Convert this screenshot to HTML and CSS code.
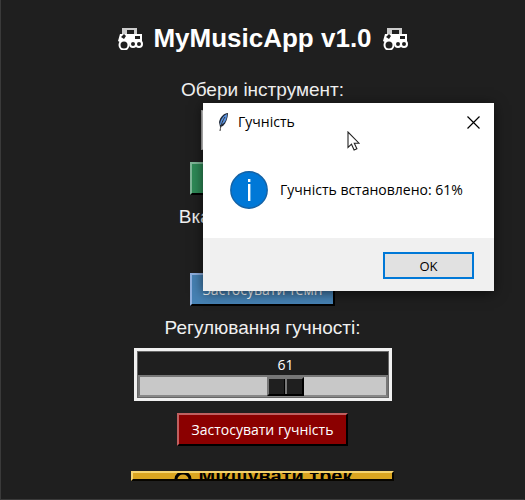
FILE: index.html
```html
<!DOCTYPE html>
<html lang="uk">
<head>
<meta charset="utf-8">
<meta name="viewport" content="width=device-width, initial-scale=1">
<title>MyMusicApp v1.0</title>
<link rel="stylesheet" href="styles.css">
</head>
<body>
<svg class="defs" aria-hidden="true">
  <symbol id="drum" viewBox="0 0 26 24">
    <path d="M5 2h15v7H5z" fill="#ccc"/>
    <path d="M10 4h7v4h-7z" fill="#1f1f1f"/>
    <path d="M3 8h22v10H6L1 15z" fill="#fff"/>
    <path d="M4 11l3-3 2 2-2 3zM18 10h5v3h-5z" fill="#1f1f1f"/>
    <circle cx="7" cy="19" r="4.500" fill="#1f1f1f" stroke="#fff" stroke-width="2"/>
    <circle cx="16" cy="18" r="3" fill="#1f1f1f" stroke="#fff" stroke-width="2"/>
    <circle cx="22" cy="18" r="3" fill="#1f1f1f" stroke="#fff" stroke-width="2"/>
  </symbol>
</svg>
<main class="app">
  <h1 class="title">
    <svg class="drum" aria-hidden="true"><use href="#drum"/></svg>
    <span>MyMusicApp v1.0</span>
    <svg class="drum" aria-hidden="true"><use href="#drum"/></svg>
  </h1>
  <label class="label" for="instrument">Обери інструмент:</label>
  <select class="combo" id="instrument"><option></option></select>
  <button class="btn green" type="button" aria-label="Інструмент"></button>
  <label class="label" for="tempo">Вкажи темп (BPM):</label>
  <input class="tempo" id="tempo" type="text">
  <button class="btn blue" type="button">Застосувати темп</button>
  <label class="label" for="volume">Регулювання гучності:</label>
  <div class="scale">
    <output class="value" for="volume">61</output>
    <input class="range" id="volume" type="range" min="0" max="100" value="61">
  </div>
  <button class="btn red" type="button">Застосувати гучність</button>
  <button class="btn gold" type="button">
    <svg class="phones" viewBox="0 0 18 18" aria-hidden="true"><path d="M2 14V12a7 6 0 0 1 14 0v2" fill="none" stroke="#000" stroke-width="3"/><path d="M2 12h4v6H2zM12 12h4v6h-4z"/></svg>
    <span>Мікшувати трек</span>
  </button>
</main>

<section class="dialog" role="dialog" aria-labelledby="dlg-title">
  <header class="bar">
    <svg class="feather" viewBox="0 0 12 20" aria-hidden="true">
      <path d="M11 1C7 1 3 5 2 10l1 5 3-1c3-3 5-8 5-13z" fill="#1d2636"/>
      <path d="M10 2C6 4 3 8 3 13c5-1 7-6 7-11z" fill="#5b93e0"/>
      <path d="M8 5C6 8 4 12 3 19" fill="none" stroke="#333" stroke-width="1"/>
    </svg>
    <h2 class="name" id="dlg-title">Гучність</h2>
    <button class="close" type="button" aria-label="Закрити">
      <svg viewBox="0 0 13 13" aria-hidden="true"><path d="M.5.5l12 12M12.5.5l-12 12" fill="none" stroke="#000" stroke-width="1.200"/></svg>
    </button>
  </header>
  <div class="message">
    <svg class="info" viewBox="0 0 38 38" aria-hidden="true">
      <circle cx="19" cy="19" r="18.200" fill="#0078d7" stroke="#1462a5" stroke-width="1.400"/>
      <path d="M18 8h2.400v3h-2.400zM18 13h2.400v17h-2.400z" fill="#fff"/>
    </svg>
    <p>Гучність встановлено: 61%</p>
  </div>
  <footer class="actions"><button class="ok" type="button">OK</button></footer>
  <svg class="pointer" viewBox="0 0 13 20" aria-hidden="true"><path d="M1 1v15.500l3.500-3.300 2.600 5.800 2.800-1.200-2.600-5.600H12z" fill="#fff" stroke="#222" stroke-width="1.100"/></svg>
</section>
</body>
</html>
```
FILE: styles.css
```css
* { box-sizing: border-box; }

body {
  margin: 0;
  min-height: 100vh;
  background: #1f1f1f;
  border: 1px solid #3a3a3a;
  border-top: 0;
  border-right-color: #1f1f1f;
  font-family: "Open Sans", "Noto Sans", sans-serif;
  color: #fff;
}

.defs { position: absolute; width: 0; height: 0; }

.app {
  display: flex;
  flex-direction: column;
  align-items: center;
  padding-top: 20px;
}

.title {
  display: flex;
  align-items: center;
  gap: 10px;
  margin: 0 0 22px;
  font: bold 26px/36px "Liberation Sans", sans-serif;
}

.drum { width: 26px; height: 24px; }

.label {
  font: 19px/24px "Liberation Sans", sans-serif;
  color: #f0f0f0;
}

.combo {
  width: 124px;
  height: 40px;
  margin: 8px 0 12px;
  border: 1px solid #aaa;
  background: #ddd;
}

.btn {
  padding: 0 10px;
  height: 33px;
  border: 2px outset;
  font: 14px/20px "Open Sans", "Noto Sans", sans-serif;
  color: #fff;
  white-space: nowrap;
}

.green, .blue { width: 145px; }

.green {
  margin-bottom: 10px;
  background: #2e8b57;
  border-color: #7fb798 #123a24 #123a24 #7fb798;
}

.tempo {
  width: 90px;
  height: 24px;
  margin: 8px 0 12px;
  border: 1px solid #999;
}

.blue {
  margin-bottom: 10px;
  background: #4682b4;
  border-color: #8fb0e0 #16324a #16324a #8fb0e0;
}

.scale {
  display: flex;
  flex-direction: column;
  width: 258px;
  margin: 8px 0 12px;
  padding: 4px 1px 1px;
  border: 3px solid #f0f0f0;
  outline: 1px solid #666;
  outline-offset: -4px;
}

.value {
  margin-left: 46px;
  text-align: center;
  font-size: 14px;
  line-height: 20px;
}

.range {
  appearance: none;
  width: 100%;
  height: 22px;
  margin: 0;
  border: 2px solid #777;
  border-bottom-color: #888;
  background: #c8c8c8;
}

.range::-webkit-slider-thumb {
  appearance: none;
  width: 37px;
  height: 19px;
  border: 2px solid;
  border-color: #777 #000 #000 #777;
  background: linear-gradient(90deg, #1f1f1f 15px, #000 15px 16px, #777 16px 18px, #1f1f1f 18px);
}

.red {
  width: 171px;
  margin-bottom: 25px;
  background: #8b0000;
  border-color: #c06060 #200 #200 #c06060;
}

.gold {
  display: flex;
  align-items: center;
  justify-content: center;
  gap: 6px;
  width: 263px;
  height: 10px;
  overflow: hidden;
  background: #daa520;
  border-color: #f5d470 #5c430b #5c430b #f5d470;
  font: bold 20px/22px "Liberation Sans", sans-serif;
  color: #000;
}

.phones { flex: none; width: 20px; height: 18px; }

.dialog {
  position: absolute;
  top: 103px;
  left: 203px;
  width: 291px;
  background: #fff;
  color: #000;
  box-shadow: 0 2px 12px rgba(0, 0, 0, 0.6);
}

.bar {
  display: flex;
  align-items: center;
  height: 38px;
  padding: 0 14px;
}

.feather { width: 12px; height: 20px; }

.name {
  flex: 1;
  margin: 0 0 0 9px;
  font-size: 14px;
  font-weight: 400;
  line-height: 20px;
}

.close {
  display: flex;
  padding: 0;
  border: 0;
  background: none;
}

.close svg { width: 13px; height: 13px; }

.message {
  display: flex;
  align-items: center;
  gap: 12px;
  height: 97px;
  padding: 0 27px;
}

.info { flex: none; width: 38px; height: 38px; }

.message p {
  margin: 0;
  font-size: 14px;
  line-height: 20px;
  white-space: nowrap;
}

.actions {
  display: flex;
  justify-content: flex-end;
  padding: 14px 20px 12px;
  background: #f0f0f0;
}

.ok {
  width: 91px;
  height: 27px;
  padding: 0;
  border: 2px solid #0078d7;
  background: #e1e1e1;
  font: 13px/20px "Open Sans", "Noto Sans", sans-serif;
  color: #000;
}

.pointer {
  position: absolute;
  top: 28px;
  left: 144px;
  width: 13px;
  height: 20px;
}
```
